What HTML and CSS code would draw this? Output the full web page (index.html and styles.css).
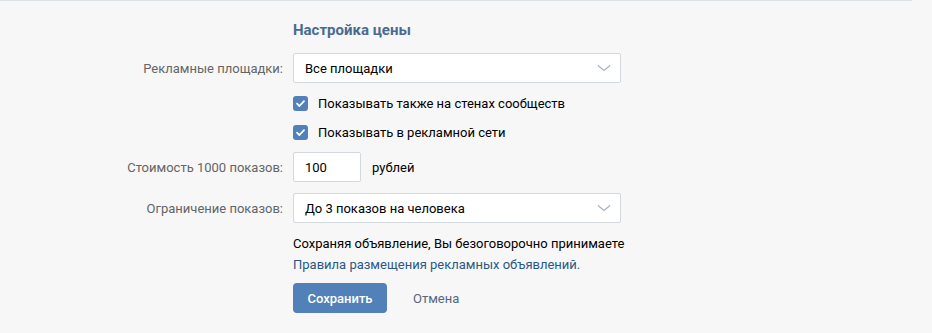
FILE: index.html
```html
<!DOCTYPE html>
<html lang="ru">
<head>
  <meta charset="UTF-8" />
  <title>Настройка цены</title>
  <link rel="stylesheet" href="styles.css">
</head>
<body>
  <div class="topline"></div>

  <form class="price-form">
    <h2 class="title">Настройка цены</h2>

    <div class="row">
      <label class="row-label">Рекламные площадки:</label>
      <div class="select wide">
        <span>Все площадки</span>
        <svg class="chevron" width="14" height="8" viewBox="0 0 14 8"><path d="M1 1.5 L7 6.5 L13 1.5" fill="none" stroke="#a8b3bf" stroke-width="1.3"/></svg>
      </div>
    </div>

    <div class="row check-row">
      <span></span>
      <label class="check"><span class="box"><svg width="15" height="15" viewBox="0 0 15 15"><path d="M4 7.6 L6.4 10 L11 5.2" fill="none" stroke="#fff" stroke-width="1.8" stroke-linecap="round" stroke-linejoin="round"/></svg></span>Показывать также на стенах сообществ</label>
    </div>

    <div class="row check-row second">
      <span></span>
      <label class="check"><span class="box"><svg width="15" height="15" viewBox="0 0 15 15"><path d="M4 7.6 L6.4 10 L11 5.2" fill="none" stroke="#fff" stroke-width="1.8" stroke-linecap="round" stroke-linejoin="round"/></svg></span>Показывать в рекламной сети</label>
    </div>

    <div class="row cost-row">
      <label class="row-label">Стоимость 1000 показов:</label>
      <div class="cost">
        <div class="input">100</div>
        <span>рублей</span>
      </div>
    </div>

    <div class="row limit-row">
      <label class="row-label">Ограничение показов:</label>
      <div class="select wide">
        <span>До 3 показов на человека</span>
        <svg class="chevron" width="14" height="8" viewBox="0 0 14 8"><path d="M1 1.5 L7 6.5 L13 1.5" fill="none" stroke="#a8b3bf" stroke-width="1.3"/></svg>
      </div>
    </div>

    <div class="row note-row">
      <span></span>
      <p class="note">Сохраняя объявление, Вы безоговорочно принимаете<br><a href="#">Правила размещения рекламных объявлений.</a></p>
    </div>

    <div class="row buttons">
      <span></span>
      <div class="actions">
        <button type="button" class="btn">Сохранить</button>
        <a href="#" class="cancel">Отмена</a>
      </div>
    </div>
  </form>
</body>
</html>
```

FILE: styles.css
```css
* {
  box-sizing: border-box; margin: 0; padding: 0;
}
body {
  font-family: Roboto, "Open Sans", "DejaVu Sans", sans-serif;
  font-size: 13px;
  background: #f7f7f7;
  color: #000;
  width: 932px;
  height: 333px;
  overflow: hidden;
}
.topline {
  width: 912px;
  height: 1px;
  background: #dce1e6;
}
.price-form {
  display: flex;
  flex-direction: column;
}
.title {
  margin: 19px 0 0 293px;
  font-size: 15px;
  line-height: 20px;
  font-weight: 700;
  color: #4a6a8f;
}
.row {
  display: grid;
  grid-template-columns: 283px auto;
  column-gap: 10px;
  align-items: center;
}
.row:nth-of-type(1) {
  margin-top: 13px;
}
.row-label {
  text-align: right;
  color: #656565;
}
.select {
  height: 30px;
  display: flex;
  align-items: center;
  justify-content: space-between;
  padding: 0 9px 0 11px;
  background: #fff;
  border: 1px solid #d3d9de;
  border-radius: 2px;
}
.wide {
  width: 328px;
}
.check-row {
  margin-top: 10px;
  height: 20px;
}
.check-row.second {
  margin-top: 9px;
}
.check {
  display: flex;
  align-items: center;
  gap: 10px;
}
.box {
  width: 15px;
  height: 15px;
  border-radius: 3px;
  background: #5181b8;
  display: flex;
}
.cost-row {
  margin-top: 10px;
}
.cost {
  display: flex;
  align-items: center;
  gap: 11px;
}
.input {
  width: 68px;
  height: 30px;
  display: flex;
  align-items: center;
  padding: 0 11px;
  background: #fff;
  border: 1px solid #d3d9de;
  border-radius: 2px;
}
.limit-row {
  margin-top: 11px;
}
.note-row {
  margin-top: 10px;
}
.note {
  line-height: 21px;
}
.note a {
  color: #2a5885;
  text-decoration: none;
}
.buttons {
  margin-top: 8px;
}
.actions {
  display: flex;
  align-items: center;
  gap: 26px;
}
.btn {
  width: 94px;
  height: 30px;
  background: #5181b8;
  color: #fff;
  border: none;
  border-radius: 4px;
  font-family: inherit;
  font-size: 13px;
  font-weight: 500;
  cursor: pointer;
}
.cancel {
  color: #55677d;
  text-decoration: none;
}
```
